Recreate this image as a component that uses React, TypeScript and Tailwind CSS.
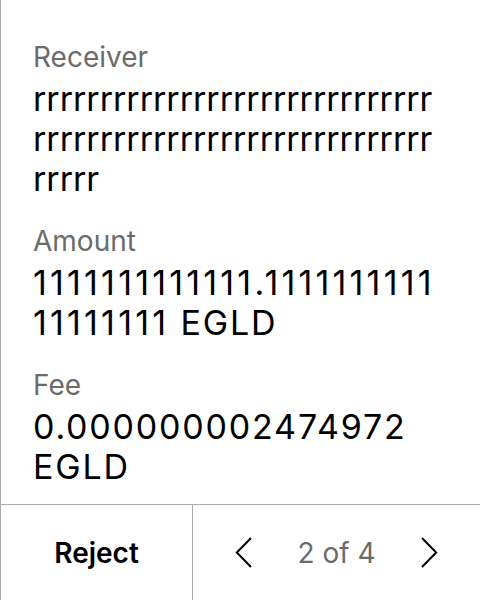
import React from 'react'

const Field = ({
  label,
  value,
  unit,
  valueClass,
}: {
  label: string
  value: string
  unit?: string
  valueClass: string
}) => (
  <div className="flex flex-col gap-[6px]">
    <div className="text-[28px] leading-[32px] text-[#6b6b6b]">{label}</div>
    <div className={valueClass}>
      {value}
      {unit && <span className="tracking-[1.8px]"> {unit}</span>}
    </div>
  </div>
)

export default function App() {
  return (
    <div
      className="flex h-[600px] w-[480px] flex-col border-l border-[#aaaaaa] bg-white"
      style={{ fontFamily: 'Inter, "Noto Sans", sans-serif' }}>
      <div className="flex flex-1 flex-col gap-[26px] pl-8 pr-10 pt-[41px]">
        <Field
          label="Receiver"
          value={'r'.repeat(65)}
          valueClass="break-all text-[34px] leading-[40px] text-black"
        />
        <Field
          label="Amount"
          value="1111111111111.111111111111111111"
          unit="EGLD"
          valueClass="break-words text-[34px] leading-[40px] tracking-[3.2px] text-black"
        />
        <Field
          label="Fee"
          value="0.000000002474972"
          unit="EGLD"
          valueClass="break-words text-[34px] leading-[40px] tracking-[1.8px] text-black"
        />
      </div>
      <div className="flex h-[96px] border-t border-[#aaaaaa]">
        <button className="flex w-[192px] items-center justify-center border-r border-[#aaaaaa] text-[28px] font-semibold text-black">
          Reject
        </button>
        <div className="flex flex-1 items-center justify-between px-[42px]">
          <svg width="17" height="31" viewBox="0 0 17 31" fill="none" stroke="black" strokeWidth="2">
            <path d="M16 1 1.8 15.5 16 30" />
          </svg>
          <span className="text-[28px] text-[#6b6b6b]">2 of 4</span>
          <svg width="17" height="31" viewBox="0 0 17 31" fill="none" stroke="black" strokeWidth="2">
            <path d="M1 1l14.2 14.5L1 30" />
          </svg>
        </div>
      </div>
    </div>
  )
}
